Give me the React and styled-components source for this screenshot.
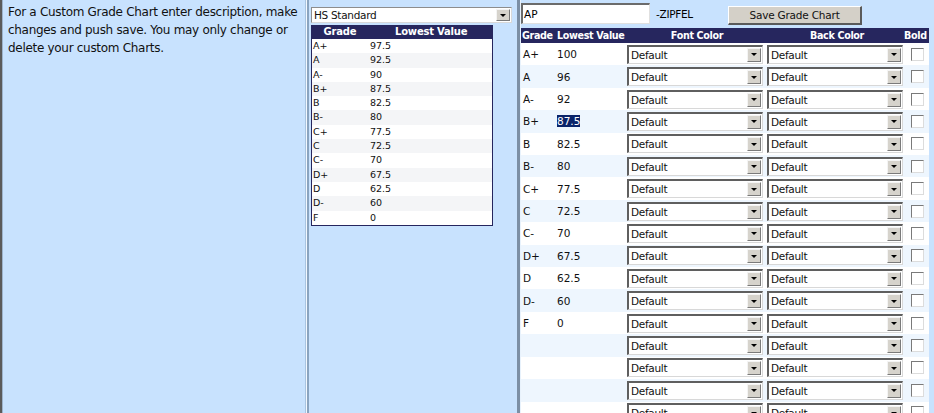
import React from 'react'
import styled, { createGlobalStyle } from 'styled-components'

const GlobalStyle = createGlobalStyle`
  html, body {
    margin: 0;
    padding: 0;
    background: #c8e2fe;
    overflow: hidden;
  }
  body {
    font-family: 'DejaVu Sans', Tahoma, sans-serif;
  }
`

const presetRows = [
  ['A+', '97.5'], ['A', '92.5'], ['A-', '90'], ['B+', '87.5'], ['B', '82.5'],
  ['B-', '80'], ['C+', '77.5'], ['C', '72.5'], ['C-', '70'], ['D+', '67.5'],
  ['D', '62.5'], ['D-', '60'], ['F', '0'],
]

const customRows = [
  ['A+', '100'], ['A', '96'], ['A-', '92'], ['B+', '87.5'], ['B', '82.5'],
  ['B-', '80'], ['C+', '77.5'], ['C', '72.5'], ['C-', '70'], ['D+', '67.5'],
  ['D', '62.5'], ['D-', '60'], ['F', '0'],
  ['', ''], ['', ''], ['', ''], ['', ''],
]

const Page = styled.div`
  display: flex;
  height: 413px;
  width: 934px;
  overflow: hidden;
`

const InfoPanel = styled.div`
  width: 295px;
  flex: none;
  padding: 3px 3px 0 6px;
  border-left: 2px solid #5b5b5b;
  border-right: 1px solid #f2f8ff;
  box-shadow: inset 1px 0 0 #9eb4cc, inset -1px 0 0 #a9c4e0;
  font-size: 12px;
  line-height: 18px;
  color: #111;
  letter-spacing: -0.3px;
`

const PresetPanel = styled.div`
  width: 206px;
  flex: none;
  padding: 7px 0 0 2px;
  border-left: 2px solid #8aa4c0;
`

const ChartPanel = styled.div`
  flex: 1;
  padding: 3px 0 0 1px;
  border-left: 3px solid #7c8fa5;
  box-shadow: inset 1px 0 0 #e8f2fc;
  display: flex;
  flex-direction: column;
`

const Select = styled.div`
  display: flex;
  align-items: center;
  box-sizing: border-box;
  width: ${(p) => p.$width}px;
  height: ${(p) => p.$height}px;
  background: #fff;
  border-top: ${(p) => (p.$inset ? '2px solid #5f5f5f' : '1px solid #8d8d8d')};
  border-left: ${(p) => (p.$inset ? '2px solid #5f5f5f' : '1px solid #8d8d8d')};
  border-right: 1px solid #d8d8d8;
  border-bottom: 1px solid #d8d8d8;
  font-size: 10.5px;
  color: #111;
  letter-spacing: -0.3px;
`

const SelectText = styled.span`
  flex: 1;
  padding-left: 2px;
  white-space: nowrap;
`

const DropButton = styled.span`
  width: 14px;
  height: calc(100% - 2px);
  margin-right: 1px;
  background: #d6d3cc;
  border-top: 1px solid #f4f4f4;
  border-left: 1px solid #f4f4f4;
  border-right: 1px solid #7a7a7a;
  border-bottom: 1px solid #7a7a7a;
  box-sizing: border-box;
  display: flex;
  align-items: center;
  justify-content: center;

  &::after {
    content: '';
    border-left: 3px solid transparent;
    border-right: 3px solid transparent;
    border-top: 3px solid #000;
  }
`

const PresetTable = styled.div`
  width: 180px;
  margin-top: 2px;
  border: 1px solid #26265e;
  border-top: none;
  background: #fff;
`

const PresetHead = styled.div`
  display: grid;
  grid-template-columns: 56px 1fr;
  height: 14px;
  background: #26265e;
  color: #fff;
  font-weight: bold;
  font-size: 10px;
  line-height: 14px;
  letter-spacing: -0.2px;
  span { text-align: center; }
  span:last-child { text-align: left; padding-left: 27px; }
`

const PresetRow = styled.div`
  display: grid;
  grid-template-columns: 57px 1fr;
  height: 14.3px;
  line-height: 14.3px;
  font-size: 9.5px;
  color: #111;
  background: ${(p) => (p.$odd ? '#f4f5f7' : '#fff')};
  padding-left: 1px;
`

const TopBar = styled.div`
  display: flex;
  align-items: center;
  height: 22px;
  margin-bottom: 3px;
`

const TextInput = styled.div`
  width: 129px;
  height: 21px;
  box-sizing: border-box;
  background: #fff;
  border-top: 2px solid #6b6b6b;
  border-left: 2px solid #6b6b6b;
  border-right: 1px solid #e0e0e0;
  border-bottom: 1px solid #e0e0e0;
  font-size: 10.5px;
  line-height: 18px;
  padding-left: 1px;
  margin-top: -2px;
`

const Suffix = styled.span`
  font-size: 10.5px;
  margin-left: 6px;
  width: 72px;
  letter-spacing: -0.3px;
`

const Button = styled.div`
  width: 134px;
  height: 19px;
  box-sizing: border-box;
  margin-top: 3px;
  background: #d4d0c8;
  border-top: 1px solid #fff;
  border-left: 1px solid #fff;
  border-right: 2px solid #5a5a5a;
  border-bottom: 2px solid #5a5a5a;
  font-size: 10.5px;
  letter-spacing: -0.2px;
  display: flex;
  align-items: center;
  justify-content: center;
  color: #111;
`

const ChartGrid = styled.div`
  width: 408px;
`

const columns = '35px 71px 140px 140px 22px'

const ChartHead = styled.div`
  display: grid;
  grid-template-columns: ${columns};
  height: 15px;
  line-height: 15px;
  background: #26265e;
  color: #fff;
  font-weight: bold;
  font-size: 9.6px;
  letter-spacing: -0.35px;
  white-space: nowrap;
`

const HeadCell = styled.span`
  text-align: ${(p) => p.$align || 'center'};
  padding-left: ${(p) => p.$pad || 0}px;
  margin-left: ${(p) => p.$shift || 0}px;
`

const ChartRow = styled.div`
  display: grid;
  grid-template-columns: ${columns};
  align-items: center;
  height: 22.42px;
  background: ${(p) => (p.$odd ? '#eef6fe' : '#fff')};
  font-size: 10.5px;
  color: #111;
`

const Cell = styled.span`
  padding-left: ${(p) => p.$pad || 0}px;
`

const Selected = styled.span`
  background: #0a246a;
  color: #fff;
`

const Checkbox = styled.span`
  width: 13px;
  height: 13px;
  box-sizing: border-box;
  margin-left: 4px;
  background: #fff;
  border-top: 1px solid #7a7a7a;
  border-left: 1px solid #7a7a7a;
  border-right: 1px solid #dcdcdc;
  border-bottom: 1px solid #dcdcdc;
`

const App = () => {
  return (
    <>
      <GlobalStyle />
      <Page>
        <InfoPanel>
          For a Custom Grade Chart enter description, make changes and push save. You may only
          change or delete your custom Charts.
        </InfoPanel>

        <PresetPanel>
          <Select $width={201} $height={16}>
            <SelectText>HS Standard</SelectText>
            <DropButton />
          </Select>
          <PresetTable>
            <PresetHead>
              <span>Grade</span>
              <span>Lowest Value</span>
            </PresetHead>
            {presetRows.map(([grade, value], i) => (
              <PresetRow key={grade} $odd={i % 2 === 1}>
                <span>{grade}</span>
                <span>{value}</span>
              </PresetRow>
            ))}
          </PresetTable>
        </PresetPanel>

        <ChartPanel>
          <TopBar>
            <TextInput>AP</TextInput>
            <Suffix>-ZIPFEL</Suffix>
            <Button>Save Grade Chart</Button>
          </TopBar>
          <ChartGrid>
            <ChartHead>
              <HeadCell $align="left" $pad={1}>Grade</HeadCell>
              <HeadCell $align="left" $pad={1}>Lowest Value</HeadCell>
              <HeadCell>Font Color</HeadCell>
              <HeadCell>Back Color</HeadCell>
              <HeadCell $align="left" $shift={-3}>Bold</HeadCell>
            </ChartHead>
            {customRows.map(([grade, value], i) => (
              <ChartRow key={i} $odd={i % 2 === 1}>
                <Cell $pad={2}>{grade}</Cell>
                <Cell $pad={1}>{grade === 'B+' ? <Selected>{value}</Selected> : value}</Cell>
                <Select $width={136} $height={19} $inset>
                  <SelectText>Default</SelectText>
                  <DropButton />
                </Select>
                <Select $width={136} $height={19} $inset>
                  <SelectText>Default</SelectText>
                  <DropButton />
                </Select>
                <Checkbox />
              </ChartRow>
            ))}
          </ChartGrid>
        </ChartPanel>
      </Page>
    </>
  )
}

export default App
